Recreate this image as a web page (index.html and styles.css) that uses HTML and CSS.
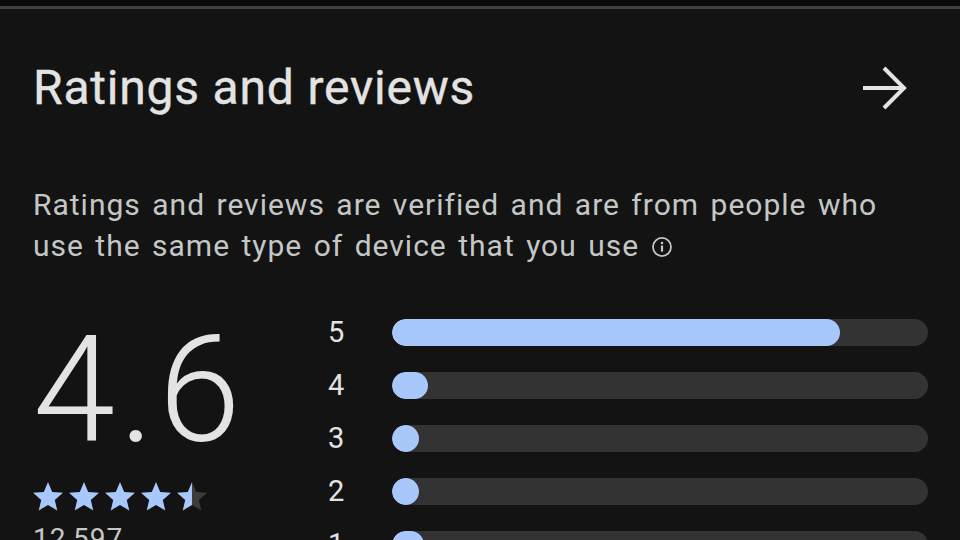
FILE: index.html
```html
<!DOCTYPE html>
<html lang="en">
<head>
  <meta charset="UTF-8">
  <title>Ratings and reviews</title>
  <link rel="stylesheet" href="styles.css">
</head>
<body>
  <div class="top-edge"></div>
  <section class="ratings">
    <header class="ratings__head">
      <h2 class="ratings__title">Ratings and reviews</h2>
      <svg class="ratings__arrow" viewBox="0 0 48 48" width="48" height="48">
        <path d="M2 24H43M23 4L43 24L23 44" fill="none" stroke="#e3e3e3" stroke-width="4"/>
      </svg>
    </header>
    <p class="ratings__note">
      Ratings and reviews are verified and are from people who use the same type of device that you use
      <svg class="ratings__info" viewBox="0 0 20 20" width="20" height="20">
        <circle cx="10" cy="10" r="8.2" fill="none" stroke="#c4c7c5" stroke-width="1.6"/>
        <circle cx="10" cy="6.4" r="1.2" fill="#c4c7c5"/>
        <rect x="9" y="8.6" width="2" height="5.6" fill="#c4c7c5"/>
      </svg>
    </p>
    <div class="summary">
      <div class="summary__score">
        <div class="score">4.6</div>
        <div class="stars">
          <svg class="star" viewBox="0 0 24 24"><path d="M12 17.27L18.18 21l-1.64-7.03L22 9.24l-7.19-.61L12 2 9.19 8.63 2 9.24l5.46 4.73L5.82 21z"/></svg>
          <svg class="star" viewBox="0 0 24 24"><path d="M12 17.27L18.18 21l-1.64-7.03L22 9.24l-7.19-.61L12 2 9.19 8.63 2 9.24l5.46 4.73L5.82 21z"/></svg>
          <svg class="star" viewBox="0 0 24 24"><path d="M12 17.27L18.18 21l-1.64-7.03L22 9.24l-7.19-.61L12 2 9.19 8.63 2 9.24l5.46 4.73L5.82 21z"/></svg>
          <svg class="star" viewBox="0 0 24 24"><path d="M12 17.27L18.18 21l-1.64-7.03L22 9.24l-7.19-.61L12 2 9.19 8.63 2 9.24l5.46 4.73L5.82 21z"/></svg>
          <svg class="star star--half" viewBox="0 0 24 24">
            <defs>
              <linearGradient id="half" x1="0" x2="1" y1="0" y2="0">
                <stop offset="0.5" stop-color="#a8c7fa"/>
                <stop offset="0.5" stop-color="#3c3c3c"/>
              </linearGradient>
            </defs>
            <path fill="url(#half)" d="M12 17.27L18.18 21l-1.64-7.03L22 9.24l-7.19-.61L12 2 9.19 8.63 2 9.24l5.46 4.73L5.82 21z"/>
          </svg>
        </div>
        <div class="count">12,597</div>
      </div>
      <div class="dist">
        <div class="dist__row"><span class="dist__label">5</span><div class="dist__track"><div class="dist__fill" style="width: 83.6%"></div></div></div>
        <div class="dist__row"><span class="dist__label">4</span><div class="dist__track"><div class="dist__fill" style="width: 6.8%"></div></div></div>
        <div class="dist__row"><span class="dist__label">3</span><div class="dist__track"><div class="dist__fill" style="width: 4.9%"></div></div></div>
        <div class="dist__row"><span class="dist__label">2</span><div class="dist__track"><div class="dist__fill" style="width: 4.9%"></div></div></div>
        <div class="dist__row"><span class="dist__label">1</span><div class="dist__track"><div class="dist__fill" style="width: 6%"></div></div></div>
      </div>
    </div>
  </section>
</body>
</html>
```
FILE: styles.css
```css
:root{
  --bg: #131314;
  --text: #e3e3e3;
  --muted: #c4c7c5;
  --accent: #a8c7fa;
  --track: #333333;
}

*{
  box-sizing: border-box;
}

html, body{
  margin: 0;
  height: 100%;
  overflow: hidden;
}

body{
  background-color: var(--bg);
  font-family: Roboto, "Noto Sans", sans-serif;
  color: var(--text);
}

.top-edge{
  height: 9px;
  background-color: #0b0b0b;
  border-bottom: 3px solid #3f3f3f;
}

.ratings{
  padding: 0 32px 0 33px;
}

.ratings__head{
  display: flex;
  align-items: center;
  justify-content: space-between;
  margin-top: 51px;
  height: 56px;
}

.ratings__title{
  margin: 0;
  font-size: 48px;
  font-weight: 400;
  line-height: 56px;
  letter-spacing: 0.8px;
  -webkit-text-stroke: 0.4px var(--text);
}

.ratings__arrow{
  margin-right: 19px;
}

.ratings__note{
  margin: 68px 0 0 0;
  font-size: 30px;
  line-height: 41px;
  letter-spacing: 1px;
  word-spacing: 3px;
  color: var(--muted);
  max-width: 880px;
}

.ratings__info{
  width: 22px;
  height: 22px;
  vertical-align: -2px;
  margin-left: 0;
}

.summary{
  display: grid;
  grid-template-columns: 295px 1fr;
  margin-top: 45px;
}

.score{
  font-size: 148px;
  font-weight: 300;
  line-height: 150px;
  letter-spacing: 4px;
  padding-top: 5px;
  margin-bottom: -5px;
}

.stars{
  display: flex;
  margin: 18px 0 0 -3px;
}

.star{
  width: 36px;
  height: 36px;
  fill: var(--accent);
}

.count{
  margin-top: 8px;
  font-size: 28px;
  line-height: 32px;
  letter-spacing: 1px;
  color: var(--muted);
}

.dist{
  display: flex;
  flex-direction: column;
  gap: 26px;
  padding-top: 8px;
}

.dist__row{
  display: flex;
  align-items: center;
  gap: 44px;
  height: 27px;
}

.dist__label{
  width: 20px;
  font-size: 29px;
  line-height: 27px;
}

.dist__track{
  flex: 1;
  height: 27px;
  border-radius: 14px;
  background-color: var(--track);
  overflow: hidden;
}

.dist__fill{
  height: 100%;
  min-width: 27px;
  border-radius: 14px;
  background-color: var(--accent);
}
```
